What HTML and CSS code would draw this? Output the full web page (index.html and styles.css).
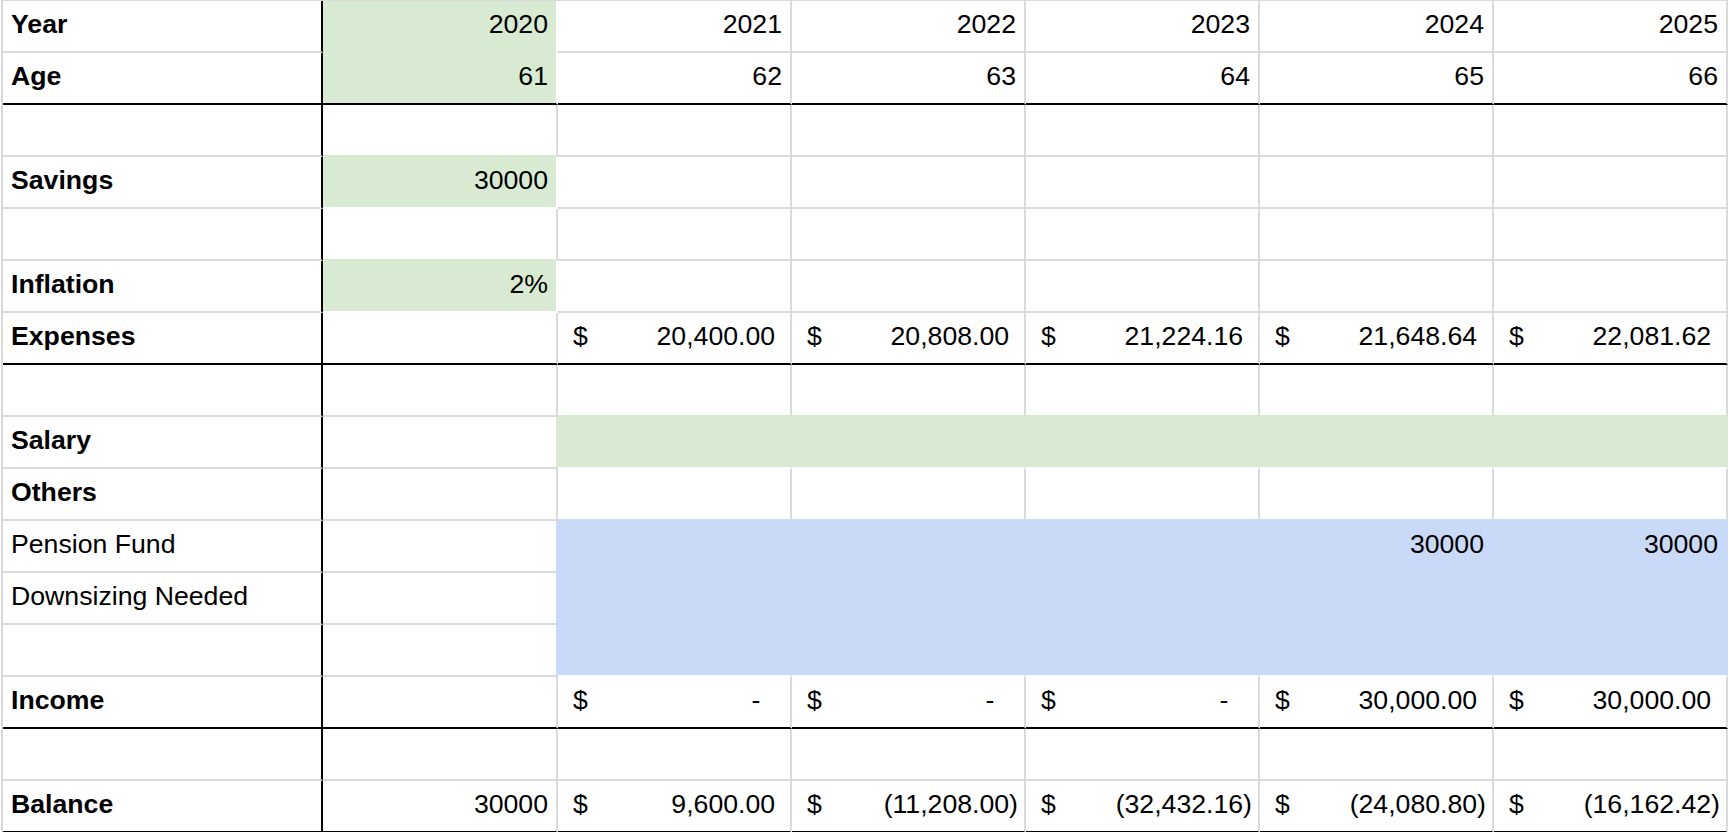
FILE: index.html
```html
<!DOCTYPE html>
<html lang="en">
<head>
<meta charset="utf-8">
<title>Retirement plan</title>
<link rel="stylesheet" href="styles.css">
</head>
<body>
<div class="sheet">
  <div class="row">
    <div class="cell lbl b">Year</div>
    <div class="cell num g wr">2020</div>
    <div class="cell num">2021</div>
    <div class="cell num">2022</div>
    <div class="cell num">2023</div>
    <div class="cell num">2024</div>
    <div class="cell num">2025</div>
  </div>
  <div class="row sep">
    <div class="cell lbl b">Age</div>
    <div class="cell num g wr">61</div>
    <div class="cell num">62</div>
    <div class="cell num">63</div>
    <div class="cell num">64</div>
    <div class="cell num">65</div>
    <div class="cell num">66</div>
  </div>
  <div class="row">
    <div class="cell lbl"></div>
    <div class="cell gb"></div>
    <div class="cell"></div><div class="cell"></div><div class="cell"></div><div class="cell"></div><div class="cell"></div>
  </div>
  <div class="row">
    <div class="cell lbl b">Savings</div>
    <div class="cell num g wr wb">30000</div>
    <div class="cell"></div><div class="cell"></div><div class="cell"></div><div class="cell"></div><div class="cell"></div>
  </div>
  <div class="row">
    <div class="cell lbl"></div>
    <div class="cell gb"></div>
    <div class="cell"></div><div class="cell"></div><div class="cell"></div><div class="cell"></div><div class="cell"></div>
  </div>
  <div class="row">
    <div class="cell lbl b">Inflation</div>
    <div class="cell num g wr wb">2%</div>
    <div class="cell"></div><div class="cell"></div><div class="cell"></div><div class="cell"></div><div class="cell"></div>
  </div>
  <div class="row sep">
    <div class="cell lbl b">Expenses</div>
    <div class="cell"></div>
    <div class="cell acct"><span>$</span><span class="pos">20,400.00</span></div>
    <div class="cell acct"><span>$</span><span class="pos">20,808.00</span></div>
    <div class="cell acct"><span>$</span><span class="pos">21,224.16</span></div>
    <div class="cell acct"><span>$</span><span class="pos">21,648.64</span></div>
    <div class="cell acct"><span>$</span><span class="pos">22,081.62</span></div>
  </div>
  <div class="row">
    <div class="cell lbl"></div>
    <div class="cell"></div>
    <div class="cell gb"></div><div class="cell gb"></div><div class="cell gb"></div><div class="cell gb"></div><div class="cell gb"></div>
  </div>
  <div class="row">
    <div class="cell lbl b">Salary</div>
    <div class="cell gr"></div>
    <div class="cell g wb"></div><div class="cell g wb"></div><div class="cell g wb"></div><div class="cell g wb"></div><div class="cell g wb"></div>
  </div>
  <div class="row">
    <div class="cell lbl b">Others</div>
    <div class="cell"></div>
    <div class="cell bb"></div><div class="cell bb"></div><div class="cell bb"></div><div class="cell bb"></div><div class="cell bb"></div>
  </div>
  <div class="row">
    <div class="cell lbl">Pension Fund</div>
    <div class="cell br"></div>
    <div class="cell bl"></div><div class="cell bl"></div><div class="cell bl"></div>
    <div class="cell num bl">30000</div>
    <div class="cell num bl">30000</div>
  </div>
  <div class="row">
    <div class="cell lbl">Downsizing Needed</div>
    <div class="cell br"></div>
    <div class="cell bl"></div><div class="cell bl"></div><div class="cell bl"></div><div class="cell bl"></div><div class="cell bl"></div>
  </div>
  <div class="row">
    <div class="cell lbl"></div>
    <div class="cell br"></div>
    <div class="cell bl wb"></div><div class="cell bl wb"></div><div class="cell bl wb"></div><div class="cell bl wb"></div><div class="cell bl wb"></div>
  </div>
  <div class="row sep">
    <div class="cell lbl b">Income</div>
    <div class="cell"></div>
    <div class="cell acct"><span>$</span><span class="zero">-</span></div>
    <div class="cell acct"><span>$</span><span class="zero">-</span></div>
    <div class="cell acct"><span>$</span><span class="zero">-</span></div>
    <div class="cell acct"><span>$</span><span class="pos">30,000.00</span></div>
    <div class="cell acct"><span>$</span><span class="pos">30,000.00</span></div>
  </div>
  <div class="row">
    <div class="cell lbl"></div>
    <div class="cell"></div>
    <div class="cell"></div><div class="cell"></div><div class="cell"></div><div class="cell"></div><div class="cell"></div>
  </div>
  <div class="row sep">
    <div class="cell lbl b">Balance</div>
    <div class="cell num">30000</div>
    <div class="cell acct"><span>$</span><span class="pos">9,600.00</span></div>
    <div class="cell acct"><span>$</span><span>(11,208.00)</span></div>
    <div class="cell acct"><span>$</span><span>(32,432.16)</span></div>
    <div class="cell acct"><span>$</span><span>(24,080.80)</span></div>
    <div class="cell acct"><span>$</span><span>(16,162.42)</span></div>
  </div>
</div>
</body>
</html>
```

FILE: styles.css
```css
html, body {
  margin: 0;
  padding: 0;
  background: #ffffff;
}

body {
  font-family: "Liberation Sans", Arial, sans-serif;
  font-size: 26.67px;
  color: #000000;
  overflow: hidden;
}

.sheet {
  margin-left: 1px;
  width: 1727px;
  border-left: 2px solid #dadada;
  border-top: 1px solid #dadada;
  box-sizing: border-box;
}

.row {
  display: grid;
  grid-template-columns: 320px 235px repeat(5, 234px);
  height: 52px;
}

.cell {
  box-sizing: border-box;
  height: 52px;
  border-right: 2px solid #dadada;
  border-bottom: 2px solid #dadada;
  padding: 0 8px;
  line-height: 47px;
  white-space: nowrap;
  overflow: hidden;
}

.lbl {
  border-right-color: #000000;
}

.b {
  font-weight: bold;
}

.num {
  text-align: right;
}

/* green fill */
.g {
  background: #d9ead3;
  border-right-color: transparent;
  border-bottom-color: transparent;
}

/* blue fill */
.bl {
  background: #c9daf8;
  border-right-color: transparent;
  border-bottom-color: transparent;
}

/* borders of neighbours that touch a filled cell */
.gb { border-bottom-color: #d9ead3; }
.gr { border-right-color: #d9ead3; }
.bb { border-bottom-color: #c9daf8; }
.br { border-right-color: #c9daf8; }
.wr { border-right-color: #ffffff; }
.wb { border-bottom-color: #ffffff; }

.row.sep > .cell {
  border-bottom-color: #000000;
}

/* accounting format */
.acct {
  display: flex;
  justify-content: space-between;
  padding-left: calc(6px + 0.333em);
  padding-right: 6px;
}

.acct .pos {
  padding-right: 0.333em;
}

.acct .zero {
  padding-right: calc(0.333em + 0.556em);
}
```
